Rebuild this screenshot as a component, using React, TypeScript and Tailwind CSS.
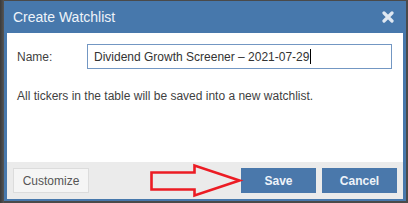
const font = { fontFamily: '"Liberation Sans", Arial, sans-serif' };

const CloseIcon = () => (
  <svg width="12" height="12" viewBox="0 0 12 12" className="block">
    <path d="M2 2 L10 10 M10 2 L2 10" stroke="#dfe8f2" strokeWidth="3.2" strokeLinecap="round" />
  </svg>
);

const Arrow = () => (
  <svg
    width="100"
    height="36"
    viewBox="146 162 100 36"
    className="pointer-events-none absolute left-[146px] top-[162px]"
  >
    <path
      d="M151.5 172.5 L194.5 172.5 L194.5 165.5 L239.5 180.5 L194.5 195.5 L194.5 189.5 L151.5 189.5 Z"
      fill="none"
      stroke="#ec1c24"
      strokeWidth="2.6"
      strokeLinejoin="miter"
    />
  </svg>
);

export default function App() {
  return (
    <div className="relative h-[203px] w-[408px] overflow-hidden bg-[#4a4a4a]" style={font}>
      <div className="absolute inset-y-0 left-0 w-[4px] bg-gradient-to-r from-[#3a3a3a] to-[#555]" />
      <div className="ml-[4px] mt-[1px] flex h-[200px] w-[402px] flex-col bg-[#4778ac] px-[3px] pb-[2px]">
        <div className="flex h-[32px] items-center justify-between pl-[6px] pr-[9px]">
          <span className="text-[14px] leading-none text-[#eef3f9]">Create Watchlist</span>
          <CloseIcon />
        </div>
        <div className="flex flex-1 flex-col bg-white px-[10px] pt-[11px] text-[12px] leading-[14px] text-[#3f3f3f]">
          <div className="flex items-center">
            <span className="w-[70px]">Name:</span>
            <div className="flex h-[25px] w-[305px] items-center border border-[#7397c3] bg-white px-[6px] text-[#333]">
              <span>Dividend Growth Screener – 2021-07-29</span>
              <span className="ml-[1px] h-[15px] w-[1px] bg-black" />
            </div>
          </div>
          <p className="mt-[20px]">All tickers in the table will be saved into a new watchlist.</p>
        </div>
        <div className="flex h-[37px] items-start justify-between bg-[#ebebeb] px-[6px] pt-[6px] text-[12px]">
          <button className="h-[25px] w-[76px] border border-[#dcdcdc] bg-[#f5f5f5] text-[#555]">
            Customize
          </button>
          <div className="flex gap-[6px]">
            <button className="h-[25px] w-[75px] bg-[#4a78ab] font-bold text-[#eef3f9]">Save</button>
            <button className="h-[25px] w-[75px] bg-[#4a78ab] font-bold text-[#eef3f9]">Cancel</button>
          </div>
        </div>
      </div>
      <Arrow />
    </div>
  );
}
